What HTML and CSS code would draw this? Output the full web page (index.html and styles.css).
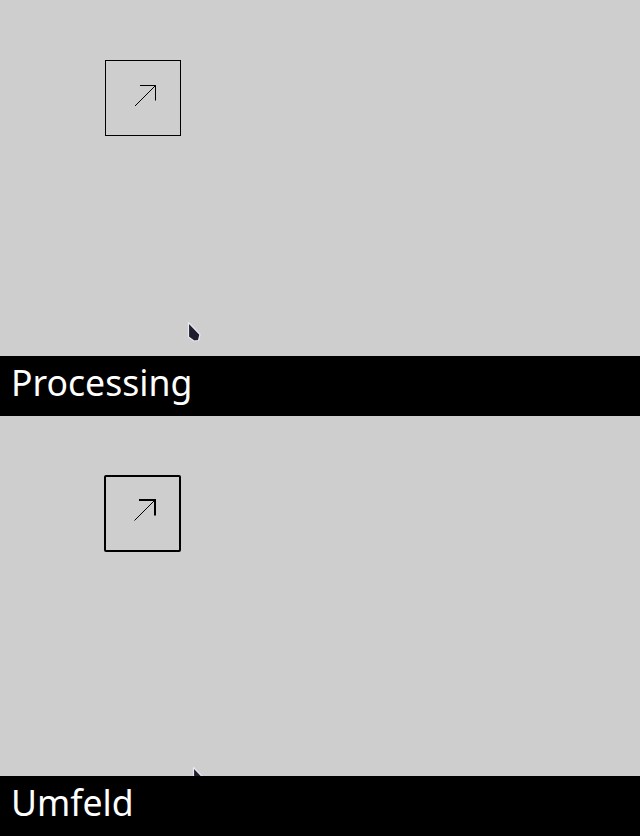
FILE: index.html
```html
<!DOCTYPE html>
<html>
<head>
<meta charset="utf-8">
<link rel="stylesheet" href="styles.css">
</head>
<body>
<section class="panel panel-a">
  <div class="box box-thin">
    <svg class="arrow" width="76" height="76" viewBox="0 0 76 76">
      <path d="M35 25.5 H50.5 V40.5" fill="none" stroke="#000" stroke-width="1"/>
      <path d="M50.5 25.5 L30 46" fill="none" stroke="#000" stroke-width="1"/>
    </svg>
  </div>
  <svg class="cursor cursor-a" width="16" height="22" viewBox="0 0 16 22">
    <path d="M1.5 1.5 L13 13.5 L11.5 19.5 L7 20 L1.5 16 Z" fill="#1d1d2b" stroke="#e9e9f2" stroke-width="1.2" stroke-linejoin="round"/>
  </svg>
</section>
<div class="bar">Processing</div>
<section class="panel panel-b">
  <div class="box box-thick">
    <svg class="arrow" width="73" height="73" viewBox="0 0 73 73">
      <path d="M33 23 H49 V38.5" fill="none" stroke="#000" stroke-width="2"/>
      <path d="M49 23 L28.5 43.5" fill="none" stroke="#000" stroke-width="1"/>
    </svg>
  </div>
  <svg class="cursor cursor-b" width="16" height="22" viewBox="0 0 16 22">
    <path d="M1.5 1.5 L13 13.5 L11.5 19.5 L7 20 L1.5 16 Z" fill="#1d1d2b" stroke="#e9e9f2" stroke-width="1.2" stroke-linejoin="round"/>
  </svg>
</section>
<div class="bar">Umfeld</div>
</body>
</html>
```
FILE: styles.css
```css
html, body {
  margin: 0;
  padding: 0;
  background: #cecece;
  font-family: "Noto Sans", "Open Sans", sans-serif;
}
body {
  width: 640px;
  height: 836px;
  overflow: hidden;
  display: flex;
  flex-direction: column;
}
.panel {
  position: relative;
  background: #cecece;
  box-sizing: border-box;
}
.panel-a {
  height: 356px;
  padding: 60px 0 0 105px;
}
.panel-b {
  height: 360px;
  padding: 59px 0 0 104px;
}
.box {
  box-sizing: border-box;
}
.box-thin {
  width: 76px;
  height: 76px;
  border: 1px solid #000;
}
.box-thick {
  width: 77px;
  height: 77px;
  border: 2px solid #000;
  border-radius: 2px;
}
.arrow {
  display: block;
}
.box-thin .arrow {
  margin: -1px;
}
.box-thick .arrow {
  margin: 0;
}
.cursor {
  position: absolute;
  display: block;
}
.cursor-a {
  left: 187px;
  top: 321px;
}
.cursor-b {
  left: 192px;
  top: 350px;
}
.bar {
  position: relative;
  z-index: 1;
  height: 60px;
  background: #000;
  color: #fff;
  font-size: 35.6px;
  line-height: 52px;
  padding-left: 11px;
  box-sizing: border-box;
}
```
